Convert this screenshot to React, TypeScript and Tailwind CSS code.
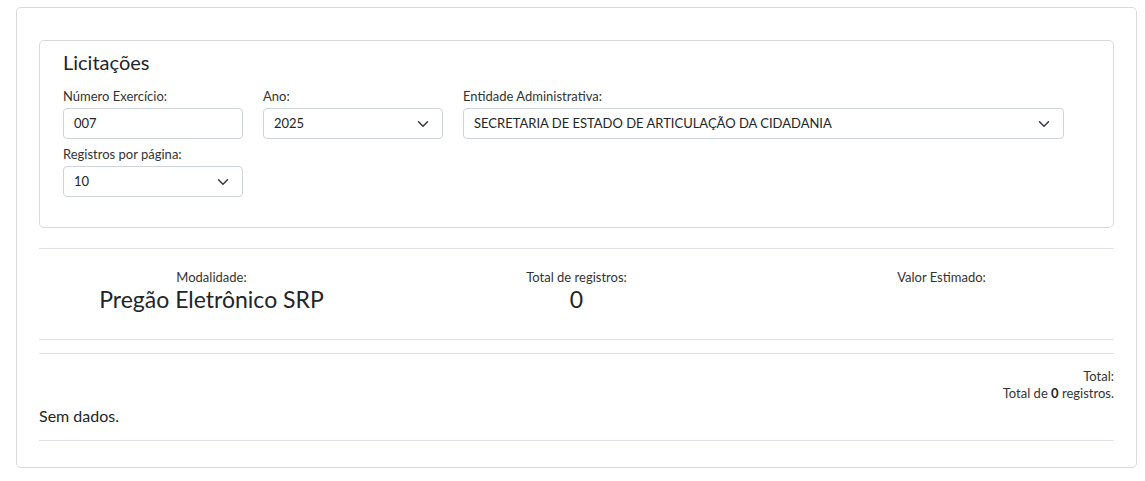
import React from 'react';

const Chevron: React.FC = () => (
    <svg width="12" height="12" viewBox="0 0 16 16" fill="none" stroke="#343a40" strokeWidth="2" strokeLinecap="round" strokeLinejoin="round">
        <path d="M2 5l6 6 6-6" />
    </svg>
);

const Field: React.FC<{ label: string; value: string; width: string; select?: boolean }> = ({ label, value, width, select }) => (
    <div className={`flex flex-col ${width}`}>
        <label className="text-[13px] leading-[18px] text-[#333] mb-[3px]">{label}</label>
        <div className="h-[31px] border border-[#ced4da] rounded-[4px] flex items-center justify-between pl-[10px] pr-[13px] text-[13px] text-[#212529] bg-white">
            <span>{value}</span>
            {select && <Chevron />}
        </div>
    </div>
);

const Stat: React.FC<{ label: string; value?: string }> = ({ label, value }) => (
    <div className="flex-1 flex flex-col items-center">
        <span className="text-[13px] leading-[18px] text-[#333]">{label}</span>
        {value && <span className="text-[23px] leading-[27px] text-[#212529]">{value}</span>}
    </div>
);

export default function App() {
    return (
        <div className="bg-white min-h-[481px] pt-[7px] pl-[16px] pr-[8px] pb-[13px] text-[#212529]" style={{ fontFamily: "Lato, 'Noto Sans', sans-serif" }}>
            <div className="border border-[#d9d9d9] rounded-[5px] px-[22px] pt-[32px] pb-[26px]">
                <section className="border border-[#d9d9d9] rounded-[5px] px-[23px] pt-[8px] pb-[30px]">
                    <h2 className="text-[20px] leading-[26px] mb-[12px]">Licitações</h2>
                    <div className="flex gap-[20px]">
                        <Field label="Número Exercício:" value="007" width="w-[180px]" />
                        <Field label="Ano:" value="2025" width="w-[180px]" select />
                        <Field label="Entidade Administrativa:" value="SECRETARIA DE ESTADO DE ARTICULAÇÃO DA CIDADANIA" width="w-[601px]" select />
                    </div>
                    <div className="flex mt-[6px]">
                        <Field label="Registros por página:" value="10" width="w-[180px]" select />
                    </div>
                </section>

                <div className="border-t border-[#dee2e6] mt-[20px]" />
                <div className="flex mx-[-10px] pt-[19px] pb-[26px]">
                    <Stat label="Modalidade:" value="Pregão Eletrônico SRP" />
                    <Stat label="Total de registros:" value="0" />
                    <Stat label="Valor Estimado:" />
                </div>
                <div className="border-t border-[#dee2e6]" />
                <div className="border-t border-[#dee2e6] mt-[13px]" />

                <div className="flex flex-col items-end text-[13px] leading-[17px] text-[#333] pt-[14px]">
                    <span>Total:</span>
                    <span>Total de <b className="font-bold text-[#212529]">0</b> registros.</span>
                </div>
                <p className="text-[16px] leading-[22px] mt-[3px] pb-[13px]">Sem dados.</p>
                <div className="border-t border-[#dee2e6]" />
            </div>
        </div>
    );
}
